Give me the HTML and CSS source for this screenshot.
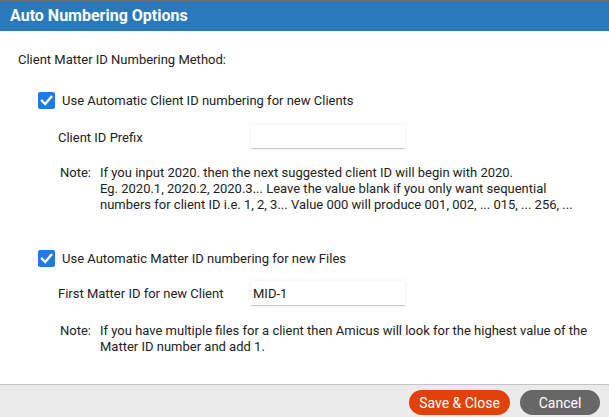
FILE: index.html
```html
<!DOCTYPE html>
<html lang="en">
<head>
    <meta charset="UTF-8">
    <meta name="viewport" content="width=device-width, initial-scale=1.0">
    <title>Auto Numbering Options</title>
    <link rel="stylesheet" href="styles.css">
</head>
<body>

<div class="dialog">
    <div class="dialog-header">Auto Numbering Options</div>

    <div class="dialog-body">
        <p class="method-title">Client Matter ID Numbering Method:</p>

        <label class="check-row first">
            <span class="check">
                <svg width="17" height="17" viewBox="0 0 17 17"><path d="M4 8.8 L7.2 12 L13.2 5" fill="none" stroke="#fff" stroke-width="2.4" stroke-linecap="square"/></svg>
            </span>
            Use Automatic Client ID numbering for new Clients
        </label>

        <div class="field-row prefix-row">
            <span class="field-label">Client ID Prefix</span>
            <input class="field-input" type="text" value="">
        </div>

        <div class="note">
            <span class="note-label">Note:</span>
            <span class="note-text">If you input 2020. then the next suggested client ID will begin with 2020.<br>Eg. 2020.1, 2020.2, 2020.3... Leave the value blank if you only want sequential<br>numbers for client ID i.e. 1, 2, 3... Value 000 will produce 001, 002, ... 015, ... 256, ...</span>
        </div>

        <label class="check-row second">
            <span class="check">
                <svg width="17" height="17" viewBox="0 0 17 17"><path d="M4 8.8 L7.2 12 L13.2 5" fill="none" stroke="#fff" stroke-width="2.4" stroke-linecap="square"/></svg>
            </span>
            Use Automatic Matter ID numbering for new Files
        </label>

        <div class="field-row matter-row">
            <span class="field-label">First Matter ID for new Client</span>
            <input class="field-input" type="text" value="MID-1">
        </div>

        <div class="note note-matter">
            <span class="note-label">Note:</span>
            <span class="note-text">If you have multiple files for a client then Amicus will look for the highest value of the<br>Matter ID number and add 1.</span>
        </div>
    </div>

    <div class="dialog-footer">
        <button class="btn btn-save">Save &amp; Close</button>
        <button class="btn btn-cancel">Cancel</button>
    </div>
</div>

</body>
</html>
```

FILE: styles.css
```css
body {
    margin: 0;
    font-family: Roboto, "Liberation Sans", Arial, sans-serif;
    font-size: 13px;
    color: #222;
    background-color: #fff;
}

.dialog {
    width: 609px;
    height: 417px;
    display: flex;
    flex-direction: column;
    overflow: hidden;
}

.dialog-header {
    border-top: 1px solid #6e6e6e;
    height: 30px;
    line-height: 30px;
    padding-left: 10px;
    background-color: #2a79bb;
    color: #fff;
    font-size: 16px;
    font-weight: bold;
}

.dialog-body {
    flex: 1;
    padding: 21px 18px 0 18px;
}

.method-title {
    margin: 0;
    line-height: 16px;
}

.check-row {
    display: flex;
    align-items: center;
    gap: 7px;
    height: 18px;
    margin-left: 20px;
}

.check-row.first {
    margin-top: 23px;
}

.check-row.second {
    margin-top: 36px;
}

.check {
    width: 17px;
    height: 17px;
    border-radius: 2px;
    background-color: #1e7be6;
    display: flex;
}

.field-row {
    display: flex;
    align-items: center;
    margin-left: 40px;
}

.prefix-row {
    margin-top: 16px;
}

.matter-row {
    margin-top: 14px;
}

.field-label {
    width: 193px;
}

.field-input {
    width: 154px;
    height: 24px;
    box-sizing: border-box;
    border: none;
    border-bottom: 1px solid #c9c9c9;
    box-shadow: 0 0 4px rgba(0,0,0,0.07);
    padding: 0 2px;
    font-family: inherit;
    font-size: 13px;
    color: #222;
    outline: none;
}

.matter-row .field-input {
    height: 25px;
}

.note {
    display: flex;
    margin-left: 42px;
    margin-top: 16px;
    line-height: 16px;
}

.note-matter {
    margin-top: 17px;
}

.note-label {
    width: 40px;
    flex-shrink: 0;
}

.dialog-footer {
    height: 32px;
    border-top: 1px solid #c4c4c4;
    background-color: #ebebeb;
    display: flex;
    justify-content: flex-end;
    align-items: center;
    gap: 10px;
    padding-right: 9px;
}

.btn {
    height: 25px;
    border: none;
    border-radius: 13px;
    color: #fff;
    font-family: inherit;
    font-size: 14px;
    cursor: pointer;
    margin-top: 3px;
}

.btn-save {
    width: 101px;
    background-color: #e2420a;
}

.btn-cancel {
    width: 80px;
    background-color: #676767;
}
```
